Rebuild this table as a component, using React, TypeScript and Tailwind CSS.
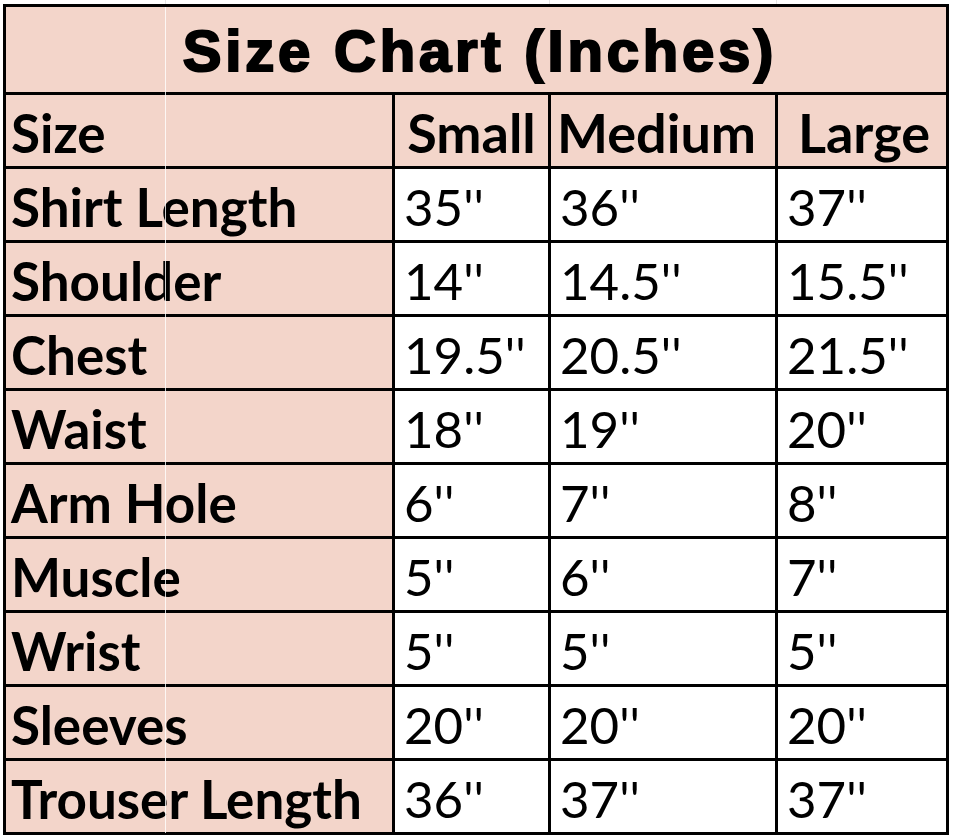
import React from "react";

const rows: [string, string, string, string][] = [
  ["Shirt Length", "35''", "36''", "37''"],
  ["Shoulder", "14''", "14.5''", "15.5''"],
  ["Chest", "19.5''", "20.5''", "21.5''"],
  ["Waist", "18''", "19''", "20''"],
  ["Arm Hole", "6''", "7''", "8''"],
  ["Muscle", "5''", "6''", "7''"],
  ["Wrist", "5''", "5''", "5''"],
  ["Sleeves", "20''", "20''", "20''"],
  ["Trouser Length", "36''", "37''", "37''"],
];

const cal = { fontFamily: "Lato, 'Open Sans', sans-serif" };

export default function App() {
  return (
    <div className="w-[955px] h-[837px] bg-white relative overflow-hidden">
      <div className="absolute left-[165px] top-0 w-px h-[5px] bg-[#e4e4e4]" />
      <div className="absolute left-[549px] top-0 w-px h-[5px] bg-[#e4e4e4]" />
      <div className="absolute left-[776px] top-0 w-px h-[5px] bg-[#e4e4e4]" />
      <div className="pt-[4px] pl-[3px]">
        <div
          className="relative w-[946px] grid grid-cols-[386px_153px_224px_168px] grid-rows-[85px_71px_repeat(9,71px)] gap-[3px] p-[3px] bg-black text-black"
          style={cal}
        >
          <div className="col-span-4 bg-[#f3d5ca] flex items-center justify-center pt-[2px] pl-[8px]">
            <span
              className="text-[58px] font-bold tracking-[3.8px] [-webkit-text-stroke:2.2px_black] leading-none"
              style={{ fontFamily: "'Liberation Sans', Arial, sans-serif" }}
            >
              Size Chart (Inches)
            </span>
          </div>
          <div className="bg-[#f3d5ca] flex items-center pl-[5px] pt-[4px] text-[53px] font-bold leading-none">Size</div>
          <div className="bg-[#f3d5ca] flex items-center justify-center pt-[4px] text-[54px] font-bold leading-none">Small</div>
          <div className="bg-[#f3d5ca] flex items-center pl-[6px] pt-[4px] text-[54px] font-bold leading-none">Medium</div>
          <div className="bg-[#f3d5ca] flex items-center justify-center pt-[4px] pl-[4px] text-[54px] font-bold leading-none">Large</div>
          {rows.map((r) => (
            <React.Fragment key={r[0]}>
              <div className="bg-[#f3d5ca] flex items-center pl-[5px] pt-[4px] text-[53px] font-bold leading-none whitespace-nowrap">
                {r[0]}
              </div>
              {r.slice(1).map((v, i) => (
                <div key={i} className="bg-white flex items-center pl-[9px] pt-[4px] text-[51px] leading-none whitespace-nowrap">
                  {v}
                </div>
              ))}
            </React.Fragment>
          ))}
          <div className="absolute left-[162px] top-[3px] w-px h-[826px] bg-white/80" />
        </div>
      </div>
    </div>
  );
}
